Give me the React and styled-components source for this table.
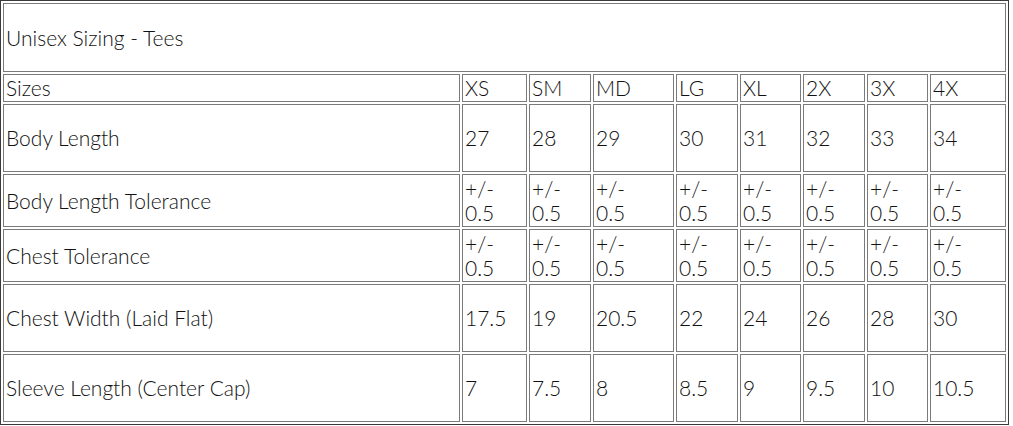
import React from 'react';
import styled, { createGlobalStyle } from 'styled-components';

const GlobalStyle = createGlobalStyle`
    html, body {
        margin: 0;
        padding: 0;
        background: #ffffff;
    }
    * {
        box-sizing: border-box;
    }
`;

const sizes = ['XS', 'SM', 'MD', 'LG', 'XL', '2X', '3X', '4X'];
const colWidths = [457, 65, 62, 81, 62, 61, 62, 61, 76];
const tolerance = sizes.map(() => ['+/-', '0.5']);

const rows = [
    { label: 'Body Length', height: 68, values: ['27', '28', '29', '30', '31', '32', '33', '34'] },
    { label: 'Body Length Tolerance', height: 53, values: tolerance },
    { label: 'Chest Tolerance', height: 53, values: tolerance },
    { label: 'Chest Width (Laid Flat)', height: 68, values: ['17.5', '19', '20.5', '22', '24', '26', '28', '30'] },
    { label: 'Sleeve Length (Center Cap)', height: 68, values: ['7', '7.5', '8', '8.5', '9', '9.5', '10', '10.5'] },
];

const CellText = ({ value }) =>
    Array.isArray(value)
        ? <>{value[0]}<br />{value[1]}</>
        : value;

const App = () => {
    return (
        <>
            <GlobalStyle />
            <Table>
                <colgroup>
                    {colWidths.map((w, i) => <col key={i} style={{ width: w }} />)}
                </colgroup>
                <tbody>
                    <Row $height={69}>
                        <Cell colSpan={9}>Unisex Sizing - Tees</Cell>
                    </Row>
                    <Row $height={28}>
                        <Cell>Sizes</Cell>
                        {sizes.map(s => <Cell key={s}>{s}</Cell>)}
                    </Row>
                    {rows.map(r => (
                        <Row key={r.label} $height={r.height}>
                            <Cell>{r.label}</Cell>
                            {r.values.map((v, i) => <Cell key={i}><CellText value={v} /></Cell>)}
                        </Row>
                    ))}
                </tbody>
            </Table>
        </>
    );
}

const Table = styled.table`
    width: 1009px;
    table-layout: fixed;
    border-collapse: separate;
    border-spacing: 2px;
    border: 1px solid #3a3a3a;
    font-family: Lato, "Open Sans", sans-serif;
    font-weight: 300;
    font-size: 21px;
    line-height: 24px;
    color: #111111;
`;

const Row = styled.tr`
    height: ${p => p.$height}px;
`;

const Cell = styled.td`
    border: 1px solid #7b7b7b;
    padding: 0 1px 0 2px;
    vertical-align: middle;
    text-align: left;
    overflow: hidden;
    white-space: nowrap;
`;

export default App;
